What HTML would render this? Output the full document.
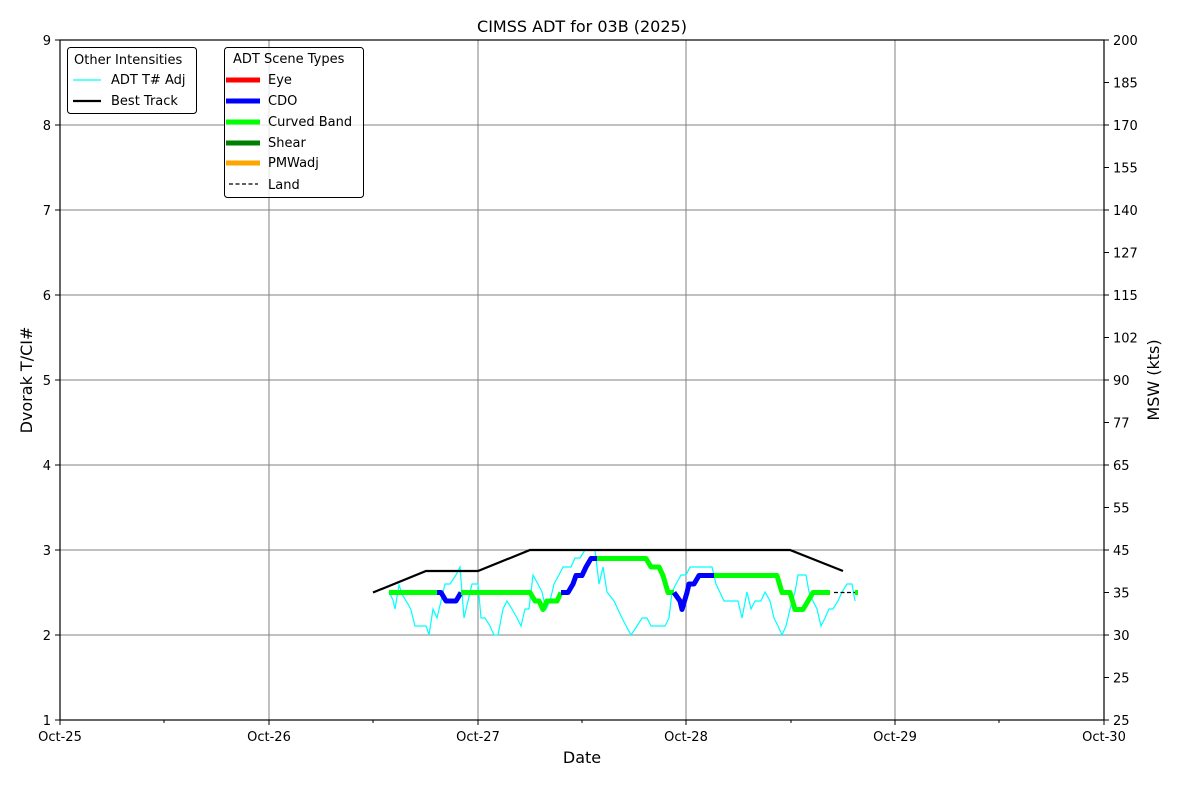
<!DOCTYPE html>
<html><head><meta charset="utf-8"><style>
html,body{margin:0;padding:0;background:#fff;}
svg{display:block;font-family:"DejaVu Sans","Liberation Sans",sans-serif;}
</style></head><body>
<svg width="1200" height="800" viewBox="0 0 1200 800" xmlns="http://www.w3.org/2000/svg">
<rect width="1200" height="800" fill="#fff"/>
<g stroke="#808080" stroke-width="1">
<line x1="269" y1="40" x2="269" y2="720"/><line x1="478" y1="40" x2="478" y2="720"/>
<line x1="686" y1="40" x2="686" y2="720"/><line x1="895" y1="40" x2="895" y2="720"/>
<line x1="60" y1="125" x2="1104" y2="125"/><line x1="60" y1="210" x2="1104" y2="210"/>
<line x1="60" y1="295" x2="1104" y2="295"/><line x1="60" y1="380" x2="1104" y2="380"/>
<line x1="60" y1="465" x2="1104" y2="465"/><line x1="60" y1="550" x2="1104" y2="550"/>
<line x1="60" y1="635" x2="1104" y2="635"/>
</g>
<polyline fill="none" stroke="#00ffff" stroke-width="1.2" points="389,592 393,600 395,609 399,585 403,596 408,604 411,610 415,626 421,626 426,626 429,635 433,609 437,618 441,601 445,584 450,584 456,575 460,567 464,618 468,601 472,584 476,584 478,584 481,618 485,618 490,626 494,635 498,635 503,609 507,601 512,609 517,618 521,626 525,609 529,609 533,575 538,584 542,592 546,609 550,601 554,584 559,575 563,567 567,567 571,567 575,558 580,558 585,550 590,550 595,550 599,584 603,567 607,592 614,601 622,618 631,635 637,626 642,618 647,618 651,626 659,626 665,626 669,618 672,592 676,584 681,575 686,575 690,567 712,567 716,584 724,601 731,601 738,601 742,618 747,592 751,609 755,601 761,601 765,592 770,601 774,618 778,626 782,635 786,626 790,609 795,592 798,575 806,575 809,592 813,601 817,609 821,626 825,618 829,609 833,609 838,601 842,592 847,584 852,584 855,601"/>
<polyline fill="none" stroke="#000" stroke-width="2.2" points="373,592.5 426,571 478,571 530,550 790,550 843,571"/>
<g fill="none" stroke-width="5" stroke-linejoin="round">
<polyline stroke="#00ff00" points="389,592.5 437,592.5"/>
<polyline stroke="#0000ff" points="437,592.5 441,592.5 446,601 456,601 461,592.5"/>
<polyline stroke="#00ff00" points="461,592.5 530,592.5 535,601 539,601 543,609.5 547,601 557,601 561,592.5"/>
<polyline stroke="#0000ff" points="561,592.5 568,592.5 573,584 576,575.5 582,575.5 586,567 591,558.5 597,558.5"/>
<polyline stroke="#00ff00" points="597,558.5 646,558.5 651,567 659,567 663,575.5 668,592.5 674,592.5"/>
<polyline stroke="#0000ff" points="674,592.5 680,601 682,609.5 687,592.5 689,584 694,584 699,575.5 714,575.5"/>
<polyline stroke="#00ff00" points="714,575.5 777,575.5 782,592.5 790,592.5 795,609.5 803,609.5 813,592.5 830,592.5"/>
<polyline stroke="#00ff00" points="855,592.5 858,592.5"/>
</g>
<line x1="834" y1="592.5" x2="855" y2="592.5" stroke="#000" stroke-width="1.2" stroke-dasharray="4,2.5"/>
<rect x="60" y="40" width="1044" height="680" fill="none" stroke="#000" stroke-width="1.2"/>
<g stroke="#000" stroke-width="1">
<line x1="60" y1="720" x2="60" y2="725"/><line x1="269" y1="720" x2="269" y2="725"/><line x1="478" y1="720" x2="478" y2="725"/><line x1="686" y1="720" x2="686" y2="725"/><line x1="895" y1="720" x2="895" y2="725"/><line x1="1104" y1="720" x2="1104" y2="725"/>
<line x1="164" y1="720" x2="164" y2="723"/><line x1="373" y1="720" x2="373" y2="723"/><line x1="582" y1="720" x2="582" y2="723"/><line x1="791" y1="720" x2="791" y2="723"/><line x1="999" y1="720" x2="999" y2="723"/>
<line x1="55" y1="40" x2="60" y2="40"/><line x1="55" y1="125" x2="60" y2="125"/><line x1="55" y1="210" x2="60" y2="210"/><line x1="55" y1="295" x2="60" y2="295"/><line x1="55" y1="380" x2="60" y2="380"/><line x1="55" y1="465" x2="60" y2="465"/><line x1="55" y1="550" x2="60" y2="550"/><line x1="55" y1="635" x2="60" y2="635"/><line x1="55" y1="720" x2="60" y2="720"/>
<line x1="1104" y1="40" x2="1109" y2="40"/><line x1="1104" y1="82.5" x2="1109" y2="82.5"/><line x1="1104" y1="125" x2="1109" y2="125"/><line x1="1104" y1="167.5" x2="1109" y2="167.5"/><line x1="1104" y1="210" x2="1109" y2="210"/><line x1="1104" y1="252.5" x2="1109" y2="252.5"/><line x1="1104" y1="295" x2="1109" y2="295"/><line x1="1104" y1="337.5" x2="1109" y2="337.5"/><line x1="1104" y1="380" x2="1109" y2="380"/><line x1="1104" y1="422.5" x2="1109" y2="422.5"/><line x1="1104" y1="465" x2="1109" y2="465"/><line x1="1104" y1="507.5" x2="1109" y2="507.5"/><line x1="1104" y1="550" x2="1109" y2="550"/><line x1="1104" y1="592.5" x2="1109" y2="592.5"/><line x1="1104" y1="635" x2="1109" y2="635"/><line x1="1104" y1="677.5" x2="1109" y2="677.5"/><line x1="1104" y1="720" x2="1109" y2="720"/>
</g>
<g font-size="13" fill="#000">
<g text-anchor="middle">
<text x="60" y="741">Oct-25</text><text x="269" y="741">Oct-26</text><text x="478" y="741">Oct-27</text><text x="686" y="741">Oct-28</text><text x="895" y="741">Oct-29</text><text x="1104" y="741">Oct-30</text>
</g>
<g text-anchor="end">
<text x="51" y="45">9</text><text x="51" y="130">8</text><text x="51" y="215">7</text><text x="51" y="300">6</text><text x="51" y="385">5</text><text x="51" y="470">4</text><text x="51" y="555">3</text><text x="51" y="640">2</text><text x="51" y="725">1</text>
</g>
<g>
<text x="1113" y="45">200</text><text x="1113" y="87.5">185</text><text x="1113" y="130">170</text><text x="1113" y="172.5">155</text><text x="1113" y="215">140</text><text x="1113" y="257.5">127</text><text x="1113" y="300">115</text><text x="1113" y="342.5">102</text><text x="1113" y="385">90</text><text x="1113" y="427.5">77</text><text x="1113" y="470">65</text><text x="1113" y="512.5">55</text><text x="1113" y="555">45</text><text x="1113" y="597.5">35</text><text x="1113" y="640">30</text><text x="1113" y="682.5">25</text><text x="1113" y="725">25</text>
</g>
</g>
<text x="582" y="32" font-size="16" text-anchor="middle">CIMSS ADT for 03B (2025)</text>
<text x="582" y="763" font-size="16" text-anchor="middle">Date</text>
<text transform="translate(32,380) rotate(-90)" font-size="16" text-anchor="middle">Dvorak T/CI#</text>
<text transform="translate(1159,380) rotate(-90)" font-size="16" text-anchor="middle">MSW (kts)</text>
<g font-size="13">
<rect x="67.5" y="47.5" width="129" height="66" rx="3" fill="#fff" fill-opacity="0.8" stroke="#000" stroke-width="1"/>
<text x="74" y="64">Other Intensities</text>
<line x1="73" y1="80" x2="101" y2="80" stroke="#00ffff" stroke-width="1.2"/>
<text x="111" y="84">ADT T# Adj</text>
<line x1="73" y1="101" x2="101" y2="101" stroke="#000" stroke-width="2.2"/>
<text x="111" y="105">Best Track</text>
<rect x="224.5" y="47.5" width="139" height="150" rx="3" fill="#fff" fill-opacity="0.8" stroke="#000" stroke-width="1"/>
<text x="233" y="63">ADT Scene Types</text>
<line x1="226" y1="80" x2="260" y2="80" stroke="#ff0000" stroke-width="5"/><text x="268" y="84">Eye</text>
<line x1="226" y1="101" x2="260" y2="101" stroke="#0000ff" stroke-width="5"/><text x="268" y="105">CDO</text>
<line x1="226" y1="122" x2="260" y2="122" stroke="#00ff00" stroke-width="5"/><text x="268" y="126">Curved Band</text>
<line x1="226" y1="143" x2="260" y2="143" stroke="#008000" stroke-width="5"/><text x="268" y="147">Shear</text>
<line x1="226" y1="163" x2="260" y2="163" stroke="#ffa500" stroke-width="5"/><text x="268" y="167">PMWadj</text>
<line x1="229" y1="184" x2="258" y2="184" stroke="#000" stroke-width="1.2" stroke-dasharray="4,2.5"/><text x="268" y="189">Land</text>
</g>
</svg>
</body></html>
